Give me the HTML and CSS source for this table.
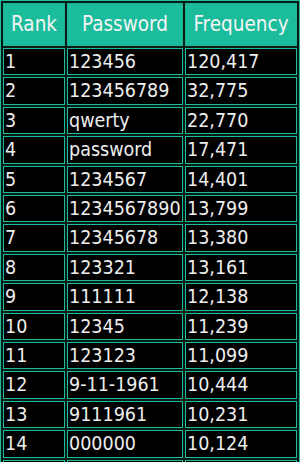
FILE: index.html
```html
<!DOCTYPE html>
<html>
<head>
<meta charset="utf-8">
<link rel="stylesheet" href="styles.css">
</head>
<body>
<table class="pw-table">
  <thead>
    <tr>
      <th class="col-rank">Rank</th>
      <th class="col-pass">Password</th>
      <th class="col-freq">Frequency</th>
    </tr>
  </thead>
  <tbody>
    <tr><td>1</td><td>123456</td><td>120,417</td></tr>
    <tr><td>2</td><td>123456789</td><td>32,775</td></tr>
    <tr><td>3</td><td>qwerty</td><td>22,770</td></tr>
    <tr><td>4</td><td>password</td><td>17,471</td></tr>
    <tr><td>5</td><td>1234567</td><td>14,401</td></tr>
    <tr><td>6</td><td>1234567890</td><td>13,799</td></tr>
    <tr><td>7</td><td>12345678</td><td>13,380</td></tr>
    <tr><td>8</td><td>123321</td><td>13,161</td></tr>
    <tr><td>9</td><td>111111</td><td>12,138</td></tr>
    <tr><td>10</td><td>12345</td><td>11,239</td></tr>
    <tr><td>11</td><td>123123</td><td>11,099</td></tr>
    <tr><td>12</td><td>9-11-1961</td><td>10,444</td></tr>
    <tr><td>13</td><td>9111961</td><td>10,231</td></tr>
    <tr><td>14</td><td>000000</td><td>10,124</td></tr>
    <tr class="row-cut"><td></td><td></td><td></td></tr>
  </tbody>
</table>
</body>
</html>
```

FILE: styles.css
```css
html, body {
  margin: 0;
  padding: 0;
  background: #0a1a15;
  overflow: hidden;
}

.pw-table {
  width: 300px;
  table-layout: fixed;
  border-collapse: separate;
  border-spacing: 2px;
  border: 1px solid #1abc9c;
  background: #0a1a15;
  font-family: "DejaVu Sans Condensed", "DejaVu Sans", sans-serif;
  font-size: 19.5px;
  color: #eeeeee;
}

.pw-table th {
  box-sizing: border-box;
  background: #1abc9c;
  border: 1px solid #1ab394;
  color: #f4f4f4;
  font-size: 20.5px;
  font-weight: normal;
  text-align: center;
  line-height: 41px;
  padding: 0;
}

.col-rank { width: 62px; }
.col-pass { width: 116px; }
.col-freq { width: 112px; }

.pw-table td {
  background: #000000;
  border: 1px solid #1abc9c;
  line-height: 25.4px;
  height: 25.4px;
  padding: 0 1px;
  white-space: nowrap;
  overflow: hidden;
}
```
